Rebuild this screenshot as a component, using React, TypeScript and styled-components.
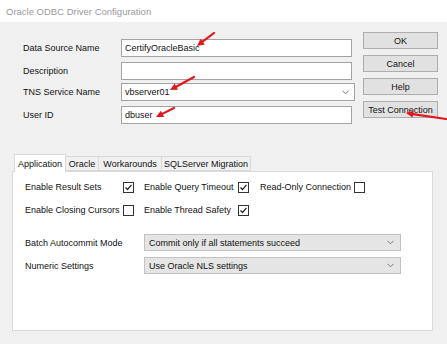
import React from 'react';
import styled, { createGlobalStyle } from 'styled-components';

const GlobalStyle = createGlobalStyle`
  html, body {
    margin: 0;
    padding: 0;
    background: #f0f0f0;
  }
  body {
    font-family: 'Liberation Sans', Arial, sans-serif;
  }
`;

const Window = styled.div`
  position: relative;
  width: 447px;
  height: 344px;
  background: #f0f0f0;
  overflow: hidden;
  display: flex;
  flex-direction: column;
  font-family: 'Liberation Sans', Arial, sans-serif;
  font-size: 9px;
  color: #111;
`;

const TitleBar = styled.div`
  height: 22px;
  flex: none;
  background: #ffffff;
  display: flex;
  align-items: center;
  padding-left: 6px;
  font-size: 9.5px;
  color: #9a9a9a;
`;

const TopSection = styled.div`
  display: flex;
  align-items: flex-start;
  padding-left: 23px;
  margin-top: 10px;
`;

const Form = styled.div`
  display: grid;
  grid-template-columns: 98px auto;
  grid-template-rows: 23px 21px 23px 19px;
  align-items: start;
  margin-top: 7px;
`;

const Label = styled.div`
  height: 18px;
  display: flex;
  align-items: center;
  white-space: nowrap;
`;

const TextBox = styled.div<{ $width?: number }>`
  box-sizing: border-box;
  width: ${(p) => p.$width ?? 231}px;
  height: 18px;
  background: #ffffff;
  border: 1px solid #a3a3a3;
  display: flex;
  align-items: center;
  justify-content: space-between;
  padding: 0 5px 0 3px;
  white-space: nowrap;
`;

const Chevron = styled.svg`
  width: 7px;
  height: 5px;
  flex: none;
`;

const ButtonColumn = styled.div`
  display: flex;
  flex-direction: column;
  gap: 6px;
  margin-left: 8px;
`;

const Button = styled.div`
  box-sizing: border-box;
  width: 75px;
  height: 17px;
  background: #e1e1e1;
  border: 1px solid #adadad;
  display: flex;
  align-items: center;
  justify-content: center;
  white-space: nowrap;
`;

const TabArea = styled.div`
  margin-top: 28px;
  margin-left: 12px;
  width: 421px;
  display: flex;
  flex-direction: column;
`;

const TabStrip = styled.div`
  display: flex;
  align-items: flex-end;
  height: 18px;
  padding-left: 2px;
`;

const Tab = styled.div<{ $active?: boolean; $width: number }>`
  box-sizing: border-box;
  width: ${(p) => p.$width}px;
  height: ${(p) => (p.$active ? 18 : 15)}px;
  margin-bottom: ${(p) => (p.$active ? -1 : 0)}px;
  position: relative;
  z-index: ${(p) => (p.$active ? 2 : 1)};
  background: ${(p) => (p.$active ? '#ffffff' : '#f0f0f0')};
  border: 1px solid #d9d9d9;
  border-bottom: ${(p) => (p.$active ? 'none' : '1px solid #d9d9d9')};
  border-left: ${(p) => (p.$active ? '1px solid #d9d9d9' : 'none')};
  display: flex;
  align-items: center;
  justify-content: center;
  white-space: nowrap;
`;

const Panel = styled.div`
  box-sizing: border-box;
  height: 160px;
  background: #ffffff;
  border: 1px solid #d9d9d9;
  padding: 9px 0 0 12px;
`;

const CheckGrid = styled.div`
  display: grid;
  grid-template-columns: 98px 21px 94px 22px 94px 11px;
  grid-auto-rows: 12px;
  row-gap: 11px;
  align-items: center;
`;

const CheckLabel = styled.div`
  white-space: nowrap;
`;

const Box = styled.div`
  box-sizing: border-box;
  width: 11px;
  height: 11px;
  border: 1px solid #333333;
  background: #ffffff;
  display: flex;
  align-items: center;
  justify-content: center;
`;

const SelectRows = styled.div`
  display: grid;
  grid-template-columns: 119px 257px;
  grid-auto-rows: 17px;
  row-gap: 6px;
  align-items: center;
  margin-top: 18px;
`;

const Select = styled.div`
  box-sizing: border-box;
  height: 17px;
  background: #e5e5e5;
  border: 1px solid #c2c2c2;
  display: flex;
  align-items: center;
  justify-content: space-between;
  padding: 0 6px 0 4px;
  white-space: nowrap;
`;

const Annotations = styled.svg`
  position: absolute;
  left: 0;
  top: 0;
  width: 447px;
  height: 344px;
  pointer-events: none;
`;

const ChevronIcon = () => (
  <Chevron viewBox="0 0 7 5">
    <polyline points="0.5,0.8 3.5,3.8 6.5,0.8" fill="none" stroke="#7a7a7a" strokeWidth="1" />
  </Chevron>
);

const CheckBox = ({ checked }: { checked?: boolean }) => (
  <Box>
    {checked && (
      <svg width="9" height="9" viewBox="0 0 9 9">
        <polyline points="1.5,4.5 3.5,6.5 7.5,1.8" fill="none" stroke="#222" strokeWidth="1.2" />
      </svg>
    )}
  </Box>
);

const arrows = [
  { x1: 214, y1: 33, x2: 197, y2: 46 },
  { x1: 194, y1: 77, x2: 170, y2: 90 },
  { x1: 174, y1: 108, x2: 156, y2: 117 },
  { x1: 446, y1: 119, x2: 406, y2: 113 },
];

const Arrow = ({ x1, y1, x2, y2 }: { x1: number; y1: number; x2: number; y2: number }) => {
  const angle = Math.atan2(y2 - y1, x2 - x1);
  const len = 8;
  const spread = 0.45;
  const bx = x2 - Math.cos(angle) * (len - 1);
  const by = y2 - Math.sin(angle) * (len - 1);
  const p1 = `${x2 - Math.cos(angle - spread) * len},${y2 - Math.sin(angle - spread) * len}`;
  const p2 = `${x2 - Math.cos(angle + spread) * len},${y2 - Math.sin(angle + spread) * len}`;
  return (
    <g>
      <line x1={x1} y1={y1} x2={bx} y2={by} stroke="#e3161c" strokeWidth="2.2" strokeLinecap="round" />
      <polygon points={`${x2},${y2} ${p1} ${p2}`} fill="#e3161c" />
    </g>
  );
};

export default function App() {
  return (
    <Window>
      <GlobalStyle />
      <TitleBar>Oracle ODBC Driver Configuration</TitleBar>

      <TopSection>
        <Form>
          <Label>Data Source Name</Label>
          <TextBox>CertifyOracleBasic</TextBox>
          <Label>Description</Label>
          <TextBox />
          <Label>TNS Service Name</Label>
          <TextBox $width={234}>
            vbserver01
            <ChevronIcon />
          </TextBox>
          <Label>User ID</Label>
          <TextBox>dbuser</TextBox>
        </Form>

        <ButtonColumn>
          <Button>OK</Button>
          <Button>Cancel</Button>
          <Button>Help</Button>
          <Button>Test Connection</Button>
        </ButtonColumn>
      </TopSection>

      <TabArea>
        <TabStrip>
          <Tab $active $width={52}>Application</Tab>
          <Tab $width={33}>Oracle</Tab>
          <Tab $width={63}>Workarounds</Tab>
          <Tab $width={89}>SQLServer Migration</Tab>
        </TabStrip>
        <Panel>
          <CheckGrid>
            <CheckLabel>Enable Result Sets</CheckLabel>
            <CheckBox checked />
            <CheckLabel>Enable Query Timeout</CheckLabel>
            <CheckBox checked />
            <CheckLabel>Read-Only Connection</CheckLabel>
            <CheckBox />

            <CheckLabel>Enable Closing Cursors</CheckLabel>
            <CheckBox />
            <CheckLabel>Enable Thread Safety</CheckLabel>
            <CheckBox checked />
          </CheckGrid>

          <SelectRows>
            <CheckLabel>Batch Autocommit Mode</CheckLabel>
            <Select>
              Commit only if all statements succeed
              <ChevronIcon />
            </Select>
            <CheckLabel>Numeric Settings</CheckLabel>
            <Select>
              Use Oracle NLS settings
              <ChevronIcon />
            </Select>
          </SelectRows>
        </Panel>
      </TabArea>

      <Annotations viewBox="0 0 447 344">
        {arrows.map((a, i) => (
          <Arrow key={i} {...a} />
        ))}
      </Annotations>
    </Window>
  );
}
